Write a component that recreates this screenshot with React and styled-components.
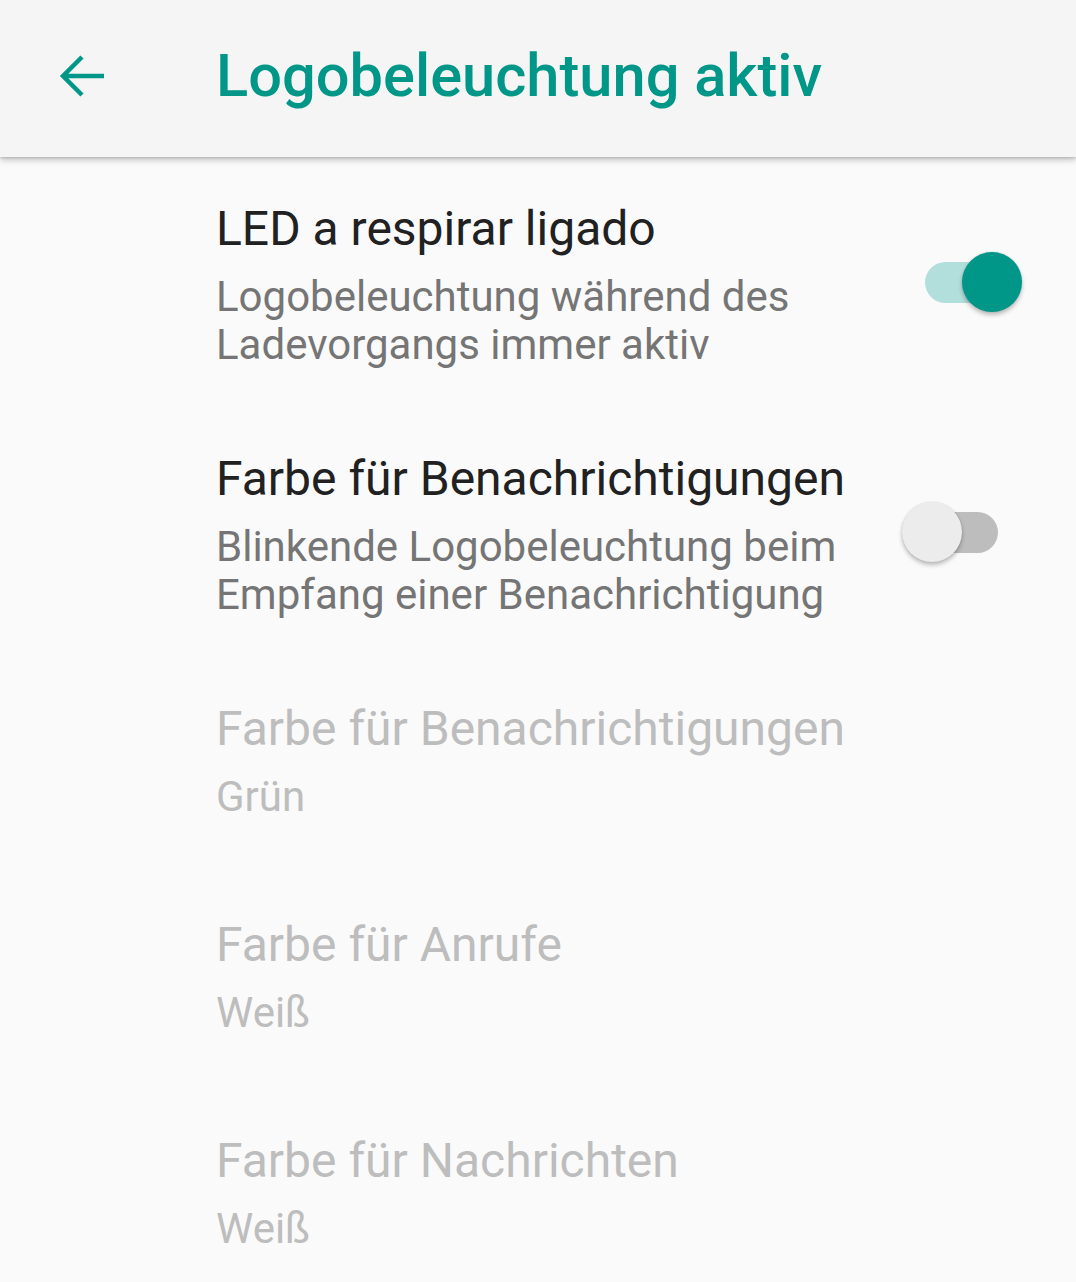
import React, { useState } from 'react';
import styled, { createGlobalStyle } from 'styled-components';

const GlobalStyle = createGlobalStyle`
  html, body {
    margin: 0;
    padding: 0;
    background: #fafafa;
  }
  body {
    font-family: Roboto, 'Noto Sans', sans-serif;
  }
`;

const Screen = styled.div`
  width: 1076px;
  min-height: 1282px;
  background: #fafafa;
  overflow: hidden;
`;

const Toolbar = styled.header`
  position: relative;
  z-index: 1;
  display: flex;
  align-items: center;
  height: 157px;
  background: #f5f5f5;
  box-shadow: 0 3px 6px rgba(0, 0, 0, 0.22), 0 1px 2px rgba(0, 0, 0, 0.12);
`;

const BackButton = styled.button`
  display: flex;
  align-items: center;
  justify-content: center;
  width: 72px;
  height: 72px;
  margin-left: 45px;
  margin-top: -6px;
  padding: 0;
  border: none;
  background: none;
  color: #009688;
  cursor: pointer;
`;

const Title = styled.h1`
  margin: -6px 0 0 99px;
  font-size: 59.6px;
  font-weight: 500;
  color: #009688;
  letter-spacing: 0;
`;

const List = styled.div`
  display: flex;
  flex-direction: column;
`;

const Row = styled.div`
  display: flex;
  align-items: center;
  padding: 44px 54px ${(p) => (p.$tall ? '38px' : '52px')} 216px;
`;

const Texts = styled.div`
  flex: 1;
  display: flex;
  flex-direction: column;
  gap: 16px;
`;

const ItemTitle = styled.div`
  font-size: 48px;
  line-height: 56px;
  color: ${(p) => (p.$disabled ? '#bdbdbd' : '#212121')};
`;

const Summary = styled.div`
  font-size: 42px;
  line-height: 48px;
  color: ${(p) => (p.$disabled ? '#bdbdbd' : '#757575')};
`;

const SwitchWrap = styled.div`
  position: relative;
  width: 120px;
  height: 64px;
  margin-top: ${(p) => p.$offset}px;
  flex-shrink: 0;
`;

const Track = styled.div`
  position: absolute;
  left: 23px;
  top: 12px;
  width: 73px;
  height: 41px;
  border-radius: 21px;
  background: ${(p) => (p.$on ? '#b2dfdb' : '#bdbdbd')};
`;

const Thumb = styled.div`
  position: absolute;
  top: 2px;
  left: ${(p) => (p.$on ? '60px' : '0')};
  width: 60px;
  height: 60px;
  border-radius: 50%;
  background: ${(p) => (p.$on ? '#009688' : '#ececec')};
  box-shadow: 0 3px 4px rgba(0, 0, 0, 0.25), 0 0 2px rgba(0, 0, 0, 0.12);
`;

function Switch({ on, offset }) {
  return (
    <SwitchWrap $offset={offset}>
      <Track $on={on} />
      <Thumb $on={on} />
    </SwitchWrap>
  );
}

const items = [
  {
    title: 'LED a respirar ligado',
    summary: ['Logobeleuchtung während des', 'Ladevorgangs immer aktiv'],
    toggle: true,
    on: true,
    offset: -6,
  },
  {
    title: 'Farbe für Benachrichtigungen',
    summary: ['Blinkende Logobeleuchtung beim', 'Empfang einer Benachrichtigung'],
    toggle: true,
    on: false,
    offset: -6,
  },
  { title: 'Farbe für Benachrichtigungen', summary: ['Grün'], disabled: true },
  { title: 'Farbe für Anrufe', summary: ['Weiß'], disabled: true },
  { title: 'Farbe für Nachrichten', summary: ['Weiß'], disabled: true },
];

export default function App() {
  const [states, setStates] = useState(items.map((i) => !!i.on));

  return (
    <Screen>
      <GlobalStyle />
      <Toolbar>
        <BackButton aria-label="back">
          <svg width="48" height="48" viewBox="0 0 48 48">
            <path
              d="M47 24H6M25 5L6 24l19 19"
              fill="none"
              stroke="currentColor"
              strokeWidth="4.5"
            />
          </svg>
        </BackButton>
        <Title>Logobeleuchtung aktiv</Title>
      </Toolbar>
      <List>
        {items.map((item, i) => (
          <Row
            key={i}
            $tall={item.toggle}
            onClick={() =>
              item.toggle && setStates((s) => s.map((v, j) => (j === i ? !v : v)))
            }
          >
            <Texts>
              <ItemTitle $disabled={item.disabled}>{item.title}</ItemTitle>
              <Summary $disabled={item.disabled}>
                {item.summary.map((line) => (
                  <div key={line}>{line}</div>
                ))}
              </Summary>
            </Texts>
            {item.toggle && <Switch on={states[i]} offset={item.offset} />}
          </Row>
        ))}
      </List>
    </Screen>
  );
}
